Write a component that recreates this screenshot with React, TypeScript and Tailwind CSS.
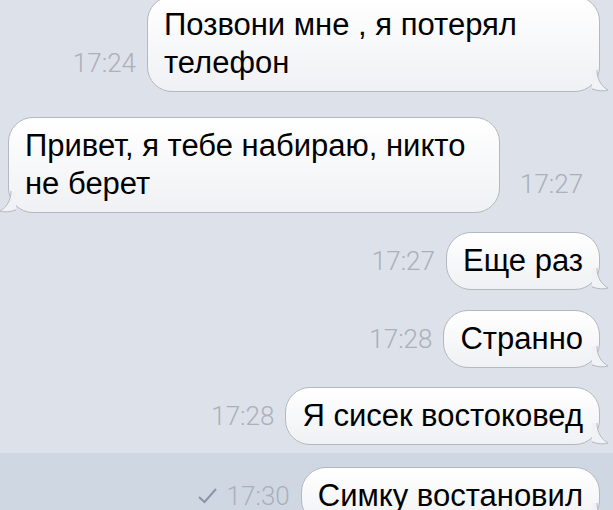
import React from 'react';

type Msg = {
	lines: string[];
	time: string;
	out: boolean;
	gap: string;
	width?: string;
	read?: boolean;
};

const messages: Msg[] = [
	{ lines: ['Позвони мне , я потерял', 'телефон'], time: '17:24', out: true, gap: '-mt-[4px]', width: 'w-[453px]' },
	{ lines: ['Привет, я тебе набираю, никто', 'не берет'], time: '17:27', out: false, gap: 'mt-[25px]', width: 'w-[492px]' },
	{ lines: ['Еще раз'], time: '17:27', out: true, gap: 'mt-[19px]' },
	{ lines: ['Странно'], time: '17:28', out: true, gap: 'mt-[20px]' },
	{ lines: ['Я сисек востоковед'], time: '17:28', out: true, gap: 'mt-[19px]' },
];

const Tail: React.FC<{ out: boolean }> = ({ out }) => (
	<svg
		width="18"
		height="22"
		viewBox="0 0 18 22"
		className={`absolute bottom-[-1px] ${out ? 'right-[-11px]' : 'left-[-11px] -scale-x-100'}`}
	>
		<path d="M0 0 L5 0 C5 9 9 16 16 20 C11 21.5 6 21 0 18 Z" fill="#f1f2f5" />
		<path d="M5 0 C5 9 9 16 16 20 C11 21.5 6 21 0 19" fill="none" stroke="#b3b8c1" strokeWidth="1" />
	</svg>
);

const Time: React.FC<{ time: string; read?: boolean }> = ({ time, read }) => (
	<div className="mb-[10px] flex shrink-0 items-center gap-[10px] font-['Roboto'] text-[26px] font-light leading-[38px] text-[#abb0ba]">
		{read && (
			<svg width="19" height="16" viewBox="0 0 19 16">
				<path d="M1 9 L6.5 14 L18 1" fill="none" stroke="#8a95a6" strokeWidth="2" />
			</svg>
		)}
		<span>{time}</span>
	</div>
);

const Bubble: React.FC<{ lines: string[]; out: boolean; width?: string }> = ({ lines, out, width }) => (
	<div
		className={`relative rounded-[25px] border border-[#b3b8c1] bg-gradient-to-b from-white to-[#f0f1f4] px-[16px] py-[9px] font-['Liberation_Sans',Arial,sans-serif] text-[31px] leading-[38px] text-black ${width ?? ''}`}
	>
		{lines.map((l, i) => (
			<div key={i} className="whitespace-nowrap">
				{l}
			</div>
		))}
		<Tail out={out} />
	</div>
);

const Row: React.FC<{ msg: Msg }> = ({ msg }) =>
	msg.out ? (
		<div className={`flex items-end justify-end gap-[11px] pr-[13px] ${msg.gap}`}>
			<Time time={msg.time} read={msg.read} />
			<Bubble lines={msg.lines} out width={msg.width} />
		</div>
	) : (
		<div className={`flex items-end gap-[20px] pl-[8px] ${msg.gap}`}>
			<Bubble lines={msg.lines} out={false} width={msg.width} />
			<Time time={msg.time} />
		</div>
	);

export default function App() {
	return (
		<div className="h-[510px] w-[613px] overflow-hidden bg-[#dde1ea]">
			{messages.map((m, i) => (
				<Row key={i} msg={m} />
			))}
			<div className="mt-[8px] h-[200px] bg-[#cfd7e3] pt-[14px]">
				<Row msg={{ lines: ['Симку востановил'], time: '17:30', out: true, gap: '', read: true }} />
			</div>
		</div>
	);
}
